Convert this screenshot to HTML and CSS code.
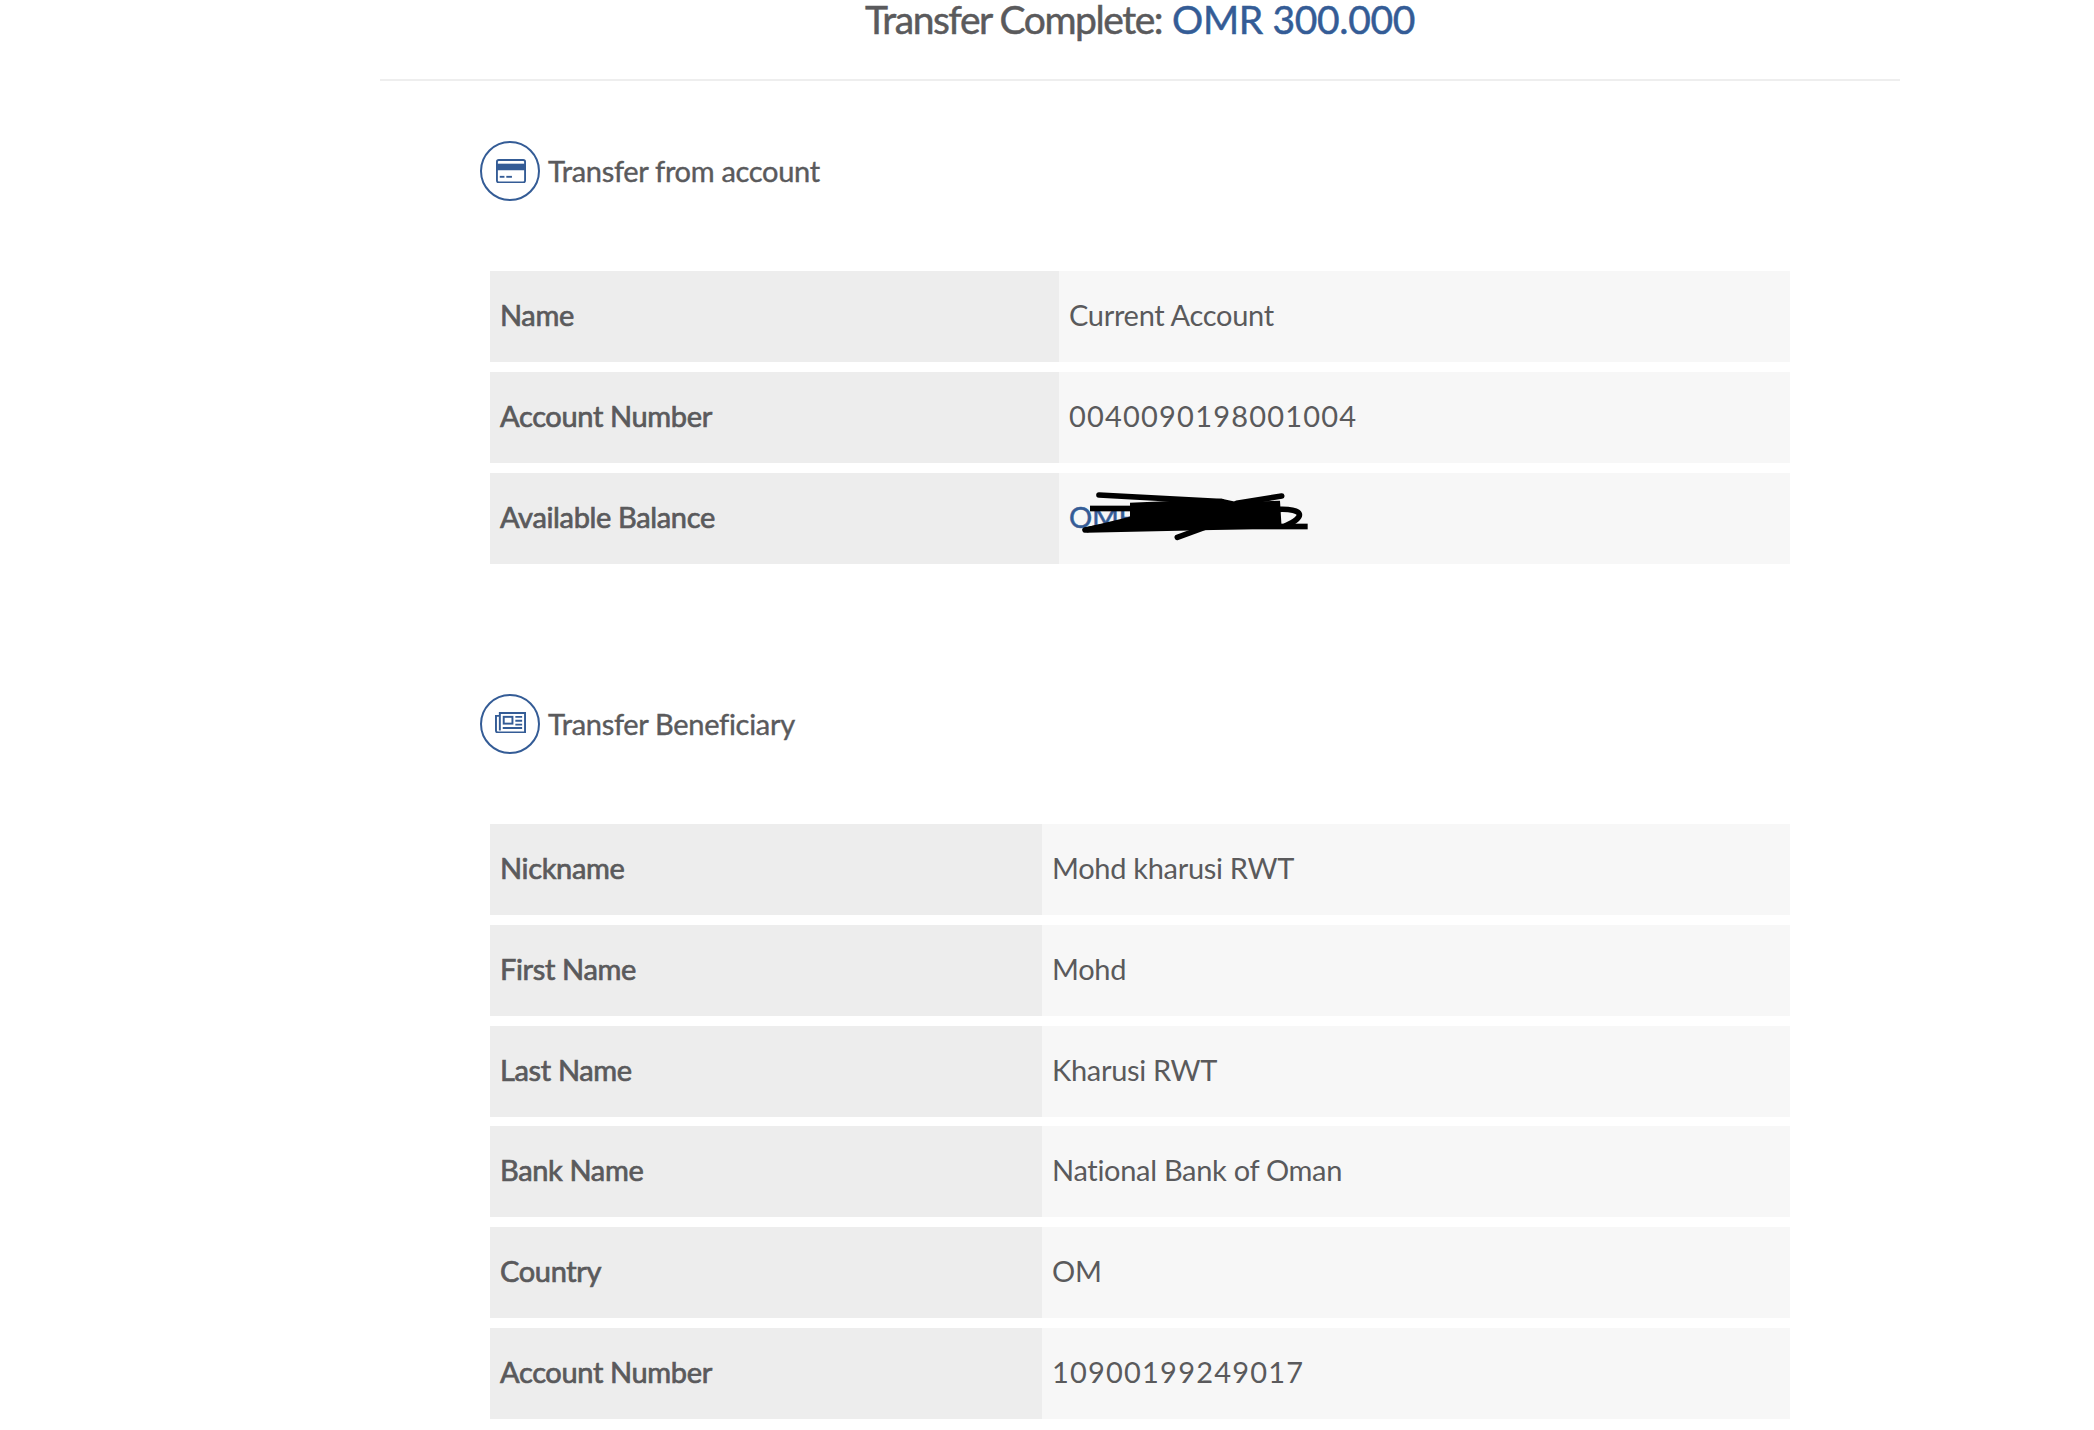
FILE: index.html
```html
<!DOCTYPE html>
<html lang="en">
<head>
<meta charset="utf-8">
<title>Transfer Complete</title>
<link rel="stylesheet" href="styles.css">
</head>
<body>
<main class="page">
  <h1 class="title"><span class="title-text">Transfer Complete:</span> <span class="accent title-amount">OMR 300.000</span></h1>
  <section class="section">
    <h2 class="section-head">
      <span class="badge">
        <svg class="badge-icon" viewBox="0 0 32 26" aria-hidden="true">
          <rect x="1" y="1" width="30" height="24" rx="2" fill="none" stroke="#345c96" stroke-width="2"/>
          <rect x="1" y="5" width="30" height="7" fill="#345c96"/>
          <rect x="4" y="18" width="5" height="2" fill="#345c96"/>
          <rect x="11" y="18" width="6" height="2" fill="#345c96"/>
        </svg>
      </span>
      Transfer from account
    </h2>
    <div class="rows rows-from">
      <div class="row"><div class="label">Name</div><div class="value">Current Account</div></div>
      <div class="row"><div class="label">Account Number</div><div class="value value-digits">0040090198001004</div></div>
      <div class="row"><div class="label">Available Balance</div><div class="value value-redacted"><span class="accent">OMR</span>
        <svg class="scribble" viewBox="0 0 900 360" aria-hidden="true">
          <path d="M130 204 L270 170 L270 128 L545 116 L590 126 L720 122 L725 205 L520 210 L140 218 Z" fill="#000"/>
          <g fill="none" stroke="#000" stroke-width="17" stroke-linecap="round">
            <path d="M177 105 L545 125"/>
            <path d="M590 130 L725 108"/>
            <path d="M135 210 C230 190 350 175 530 175"/>
            <path d="M412 232 L500 200"/>
            <path d="M715 148 C790 145 800 170 735 198"/>
          </g>
          <rect x="150" y="137" width="200" height="17" fill="#000"/>
          <rect x="520" y="191" width="283" height="17" fill="#000"/>
        </svg>
      </div></div>
    </div>
  </section>
  <section class="section section-second">
    <h2 class="section-head">
      <span class="badge">
        <svg class="badge-icon badge-icon-news" viewBox="0 0 32 22" aria-hidden="true">
          <path d="M5 1 H31 V21 H3 A2 2 0 0 1 1 19 V4 H5 Z M5 4 V19" fill="none" stroke="#345c96" stroke-width="2"/>
          <rect x="9" y="5" width="9" height="7" fill="none" stroke="#345c96" stroke-width="2"/>
          <path d="M21 5 H28 M21 9 H28 M21 13 H28 M8 16.5 H28" fill="none" stroke="#345c96" stroke-width="2"/>
        </svg>
      </span>
      Transfer Beneficiary
    </h2>
    <div class="rows rows-to">
      <div class="row"><div class="label">Nickname</div><div class="value">Mohd kharusi RWT</div></div>
      <div class="row"><div class="label">First Name</div><div class="value">Mohd</div></div>
      <div class="row"><div class="label">Last Name</div><div class="value">Kharusi RWT</div></div>
      <div class="row"><div class="label">Bank Name</div><div class="value">National Bank of Oman</div></div>
      <div class="row"><div class="label">Country</div><div class="value">OM</div></div>
      <div class="row"><div class="label">Account Number</div><div class="value value-digits">10900199249017</div></div>
    </div>
  </section>
</main>
</body>
</html>
```
FILE: styles.css
```css
* { box-sizing: border-box; }
html, body { margin: 0; height: 100%; overflow: hidden; background: #fff; }
body { font-family: "Lato", "Noto Sans", sans-serif; color: #5a5a5c; }
.page { width: 1520px; margin-left: 380px; }
.title {
  margin: 0;
  height: 81px;
  border-bottom: 2px solid #eeeeee;
  text-align: center;
  font-size: 39px;
  line-height: 38px;
  font-weight: 400;
  -webkit-text-stroke: .5px currentColor;
}
.title-text { letter-spacing: -1.45px; }
.title-amount { letter-spacing: -.35px; }
.accent { color: #345c96; }
.section { padding: 60px 110px 0 100px; }
.section-second { padding-top: 130px; }
.section-head {
  display: flex;
  align-items: center;
  gap: 8px;
  margin: 0;
  height: 60px;
  font-size: 29px;
  line-height: 54px;
  font-weight: 400;
  letter-spacing: -.3px;
  -webkit-text-stroke: .4px currentColor;
}
.badge {
  display: flex;
  align-items: center;
  justify-content: center;
  flex: none;
  width: 60px;
  height: 60px;
  padding-left: 1px;
  border: 2px solid #345c96;
  border-radius: 50%;
}
.badge-icon { width: 30px; display: block; }
.badge-icon-news { width: 31px; margin-top: -3px; }
.rows {
  display: flex;
  flex-direction: column;
  gap: 10px;
  margin: 70px 0 0 10px;
}
.rows-to { gap: 9.8px; }
.row {
  display: grid;
  height: 91px;
  font-size: 29px;
  line-height: 87px;
  align-items: stretch;
}
.rows-from .row { grid-template-columns: 569px 1fr; }
.rows-to .row { grid-template-columns: 552px 1fr; }
.label { background: #ededed; padding-left: 10px; letter-spacing: -.35px; -webkit-text-stroke: .7px currentColor; }
.value { background: #f7f7f7; padding-left: 10px; letter-spacing: -.3px; }
.value-digits { letter-spacing: 1.2px; }
.value-redacted { position: relative; -webkit-text-stroke: .5px #345c96; }
.scribble { position: absolute; left: -19px; top: -13px; width: 300px; height: 120px; }
```
